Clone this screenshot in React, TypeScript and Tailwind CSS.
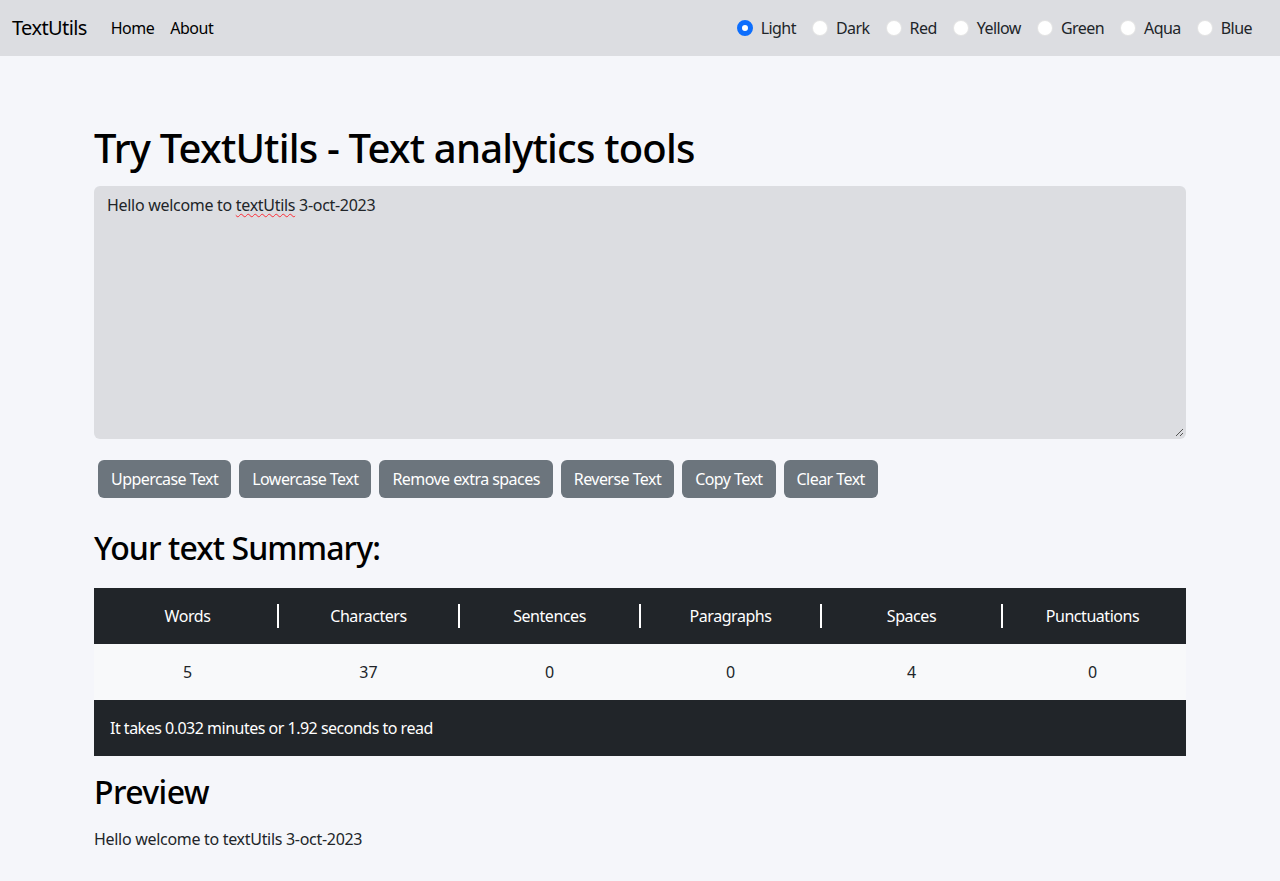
import React from "react";

const font = { fontFamily: '"Noto Sans", "Open Sans", sans-serif' };

function Radio({ label, checked }: { label: string; checked?: boolean }) {
  return (
    <div className="flex items-center mr-4">
      {checked ? (
        <span className="w-4 h-4 rounded-full border-[5px] border-[#0d6efd] bg-white box-border" />
      ) : (
        <span className="w-4 h-4 rounded-full border border-black/10 bg-white box-border" />
      )}
      <span className="ml-2 text-[16px] leading-6 text-[#212529] tracking-[-0.55px]">{label}</span>
    </div>
  );
}

const buttons = [
  "Uppercase Text",
  "Lowercase Text",
  "Remove extra spaces",
  "Reverse Text",
  "Copy Text",
  "Clear Text",
];

const heads = ["Words", "Characters", "Sentences", "Paragraphs", "Spaces", "Punctuations"];
const vals = ["5", "37", "0", "0", "4", "0"];

export default function App() {
  return (
    <div className="min-h-[881px] bg-[#f5f6fa] text-[#212529]" style={font}>
      <nav className="h-14 bg-[#dcdde1] flex items-center px-3">
        <span className="text-[20px] leading-[30px] text-black tracking-[-0.6px]">TextUtils</span>
        <div className="flex ml-4">
          <a className="px-2 text-[16px] leading-6 text-black tracking-[-0.5px]">Home</a>
          <a className="px-2 text-[16px] leading-6 text-black tracking-[-0.5px]">About</a>
        </div>
        <div className="flex ml-auto">
          <Radio label="Light" checked />
          <Radio label="Dark" />
          <Radio label="Red" />
          <Radio label="Yellow" />
          <Radio label="Green" />
          <Radio label="Aqua" />
          <Radio label="Blue" />
        </div>
      </nav>

      <main className="w-[1092px] mx-auto pt-[68px] pb-8">
        <h1 className="text-[40px] leading-[48px] font-medium text-black tracking-[-0.8px]">
          Try TextUtils - Text analytics tools
        </h1>
        <div className="mt-[14px] h-[253px] rounded-md bg-[#dcdde1] px-[13px] py-[7px] relative">
          <p className="text-[16px] leading-6 tracking-[-0.3px] text-[#212529]">
            Hello welcome to{" "}
            <span className="underline decoration-wavy decoration-red-500 decoration-1 underline-offset-2">
              textUtils
            </span>{" "}
            3-oct-2023
          </p>
          <svg className="absolute right-[2px] bottom-[2px]" width="10" height="10" viewBox="0 0 10 10">
            <path d="M9 2 L2 9 M9 6 L6 9" stroke="#555" strokeWidth="1" />
          </svg>
        </div>

        <div className="mt-[21px] flex gap-2 pl-1">
          {buttons.map((b) => (
            <button
              key={b}
              className="h-[38px] px-[13px] rounded-md bg-[#6c757d] text-white text-[16px] leading-6 tracking-[-0.55px]"
            >
              {b}
            </button>
          ))}
        </div>

        <h2 className="mt-[31px] text-[32px] leading-[38px] font-medium text-black tracking-[-0.9px]">
          Your text Summary:
        </h2>

        <div className="mt-[21px]">
          <div className="h-14 bg-[#212529] flex items-center px-1 text-white">
            {heads.map((h, i) => (
              <React.Fragment key={h}>
                <div className="flex-1 text-center text-[16px] leading-6 tracking-[-0.45px]">{h}</div>
                {i < heads.length - 1 && <div className="w-[2px] h-6 bg-white" />}
              </React.Fragment>
            ))}
          </div>
          <div className="h-14 bg-[#f8f9fa] flex items-center px-1">
            {vals.map((v, i) => (
              <React.Fragment key={i}>
                <div className="flex-1 text-center text-[16px] leading-6">{v}</div>
                {i < vals.length - 1 && <div className="w-[2px] h-6" />}
              </React.Fragment>
            ))}
          </div>
          <div className="h-14 bg-[#212529] flex items-center px-4 text-white text-[16px] leading-6 tracking-[-0.5px]">
            It takes 0.032 minutes or 1.92 seconds to read
          </div>
        </div>

        <h2 className="mt-[17px] text-[32px] leading-[38px] font-medium text-black tracking-[-0.6px]">
          Preview
        </h2>
        <p className="mt-[16px] text-[16px] leading-6 tracking-[-0.3px]">Hello welcome to textUtils 3-oct-2023</p>
      </main>
    </div>
  );
}
